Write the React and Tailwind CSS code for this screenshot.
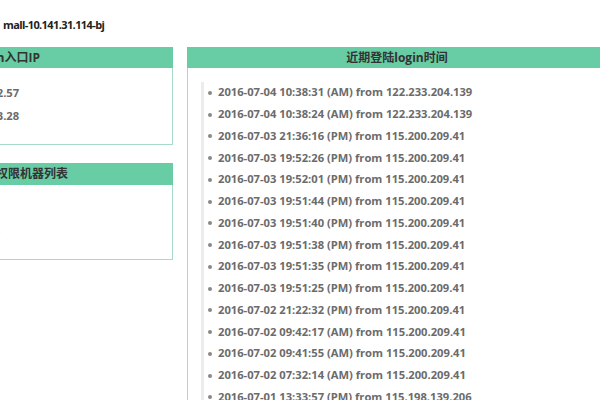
import React from "react";

const logins = [
  ["2016-07-04 10:38:31 (AM)", "122.233.204.139"],
  ["2016-07-04 10:38:24 (AM)", "122.233.204.139"],
  ["2016-07-03 21:36:16 (PM)", "115.200.209.41"],
  ["2016-07-03 19:52:26 (PM)", "115.200.209.41"],
  ["2016-07-03 19:52:01 (PM)", "115.200.209.41"],
  ["2016-07-03 19:51:44 (PM)", "115.200.209.41"],
  ["2016-07-03 19:51:40 (PM)", "115.200.209.41"],
  ["2016-07-03 19:51:38 (PM)", "115.200.209.41"],
  ["2016-07-03 19:51:35 (PM)", "115.200.209.41"],
  ["2016-07-03 19:51:25 (PM)", "115.200.209.41"],
  ["2016-07-02 21:22:32 (PM)", "115.200.209.41"],
  ["2016-07-02 09:42:17 (AM)", "115.200.209.41"],
  ["2016-07-02 09:41:55 (AM)", "115.200.209.41"],
  ["2016-07-02 07:32:14 (AM)", "115.200.209.41"],
  ["2016-07-01 13:33:57 (PM)", "115.198.139.206"],
  ["2016-07-01 13:30:12 (PM)", "115.198.139.206"],
];

export default function App() {
  return (
    <div
      className="w-[600px] h-[400px] overflow-hidden bg-white text-[#333]"
      style={{ fontFamily: '"Open Sans", "Noto Sans CJK SC", sans-serif' }}
    >
      <div className="h-[47px] pl-[3px] pt-[17px] text-[11px] tracking-[-0.6px] font-bold text-[#222] leading-[16px]">
        mall-10.141.31.114-bj
      </div>
      <div className="flex items-start -ml-[71px]">
        <div className="w-[244px] shrink-0 flex flex-col gap-[18px]">
          <div className="border border-[#a6dcc7]">
            <div className="h-[21px] bg-[#68cca5] -mx-px -mt-px pl-[22px] text-[12px] font-bold leading-[21px] text-[#333]">
              登陆login入口IP
            </div>
            <div className="pl-[22px] pt-[13px] pb-[17px] text-[11.2px] font-bold text-[#6b6b6b] leading-[23px]">
              <div>10.141.32.57</div>
              <div>10.141.33.28</div>
            </div>
          </div>
          <div className="border border-[#a6dcc7] h-[97px]">
            <div className="h-[22px] bg-[#68cca5] -mx-px -mt-px pl-[19px] text-[12px] font-bold leading-[22px] text-[#333]">
              您可登陆权限机器列表
            </div>
            <div className="pl-[22px] pt-[38px] text-[11px] text-[#ccc] leading-[16px]">
              <div>暂无机器。</div>
            </div>
          </div>
        </div>
        <div className="w-[420px] shrink-0 ml-[14px] border-l border-[#a6dcc7] min-h-[400px]">
          <div className="h-[21px] bg-[#68cca5] -ml-px text-center text-[12px] font-bold leading-[21px] text-[#333]">
            近期登陆login时间
          </div>
          <div className="ml-[13px] mt-[14px] border-l-[3px] border-[#ececec] pl-[4px]">
            {logins.map(([t, ip], i) => (
              <div
                key={i}
                className="flex items-center h-[21.75px] text-[11.2px] font-bold text-[#6b6b6b] whitespace-nowrap"
              >
                <span className="w-[4px] h-[4px] rounded-full bg-[#888] mr-[6px] shrink-0" />
                <span>
                  {t} from {ip}
                </span>
              </div>
            ))}
          </div>
        </div>
      </div>
    </div>
  );
}
